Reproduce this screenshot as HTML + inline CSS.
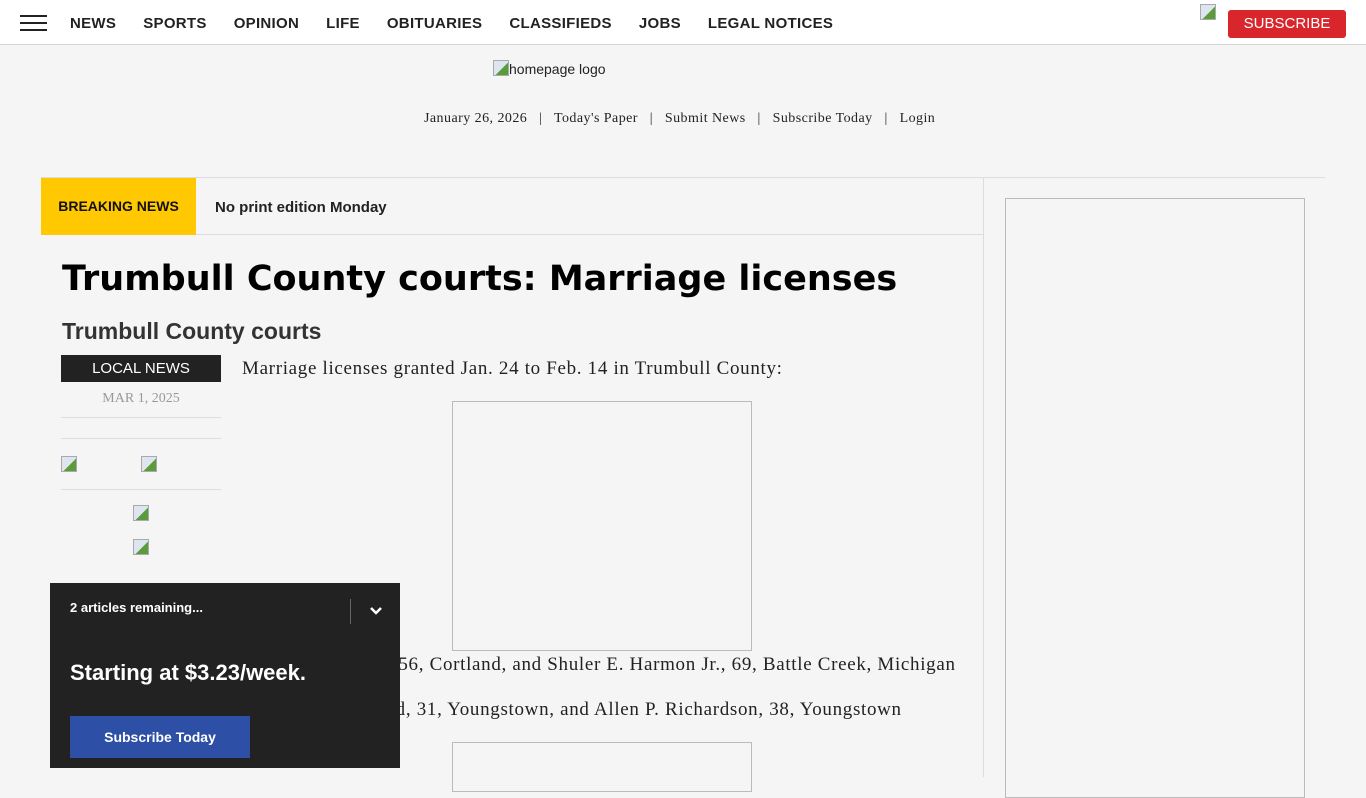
<!DOCTYPE html>
<html><head><meta charset="utf-8"><style>
*{margin:0;padding:0;box-sizing:border-box}
body{width:1366px;height:768px;overflow:hidden;background:#f5f5f5;font-family:"Liberation Sans",Arial,sans-serif;position:relative;color:#111}
.hdr{position:absolute;left:0;top:0;width:1366px;height:45px;background:#fff;border-bottom:1px solid #d6d6d6}
.burger{position:absolute;left:20px;top:15px;width:27px}
.burger i{display:block;height:2px;background:#222;margin-bottom:5px}
.nav{position:absolute;left:70px;top:15px;font-weight:bold;font-size:15px;color:#222;letter-spacing:.3px;white-space:nowrap}
.nav span{margin-right:27px}
.sub{position:absolute;left:1228px;top:10px;width:118px;height:28px;background:#d8262c;color:#fff;font-size:15px;text-align:center;line-height:28px;border-radius:3px}
.a{position:absolute}
.serif{font-family:"Liberation Serif",Georgia,serif}
.ph{position:absolute;border:1px solid #bbb;background:#f5f5f5}
.ico{position:absolute;width:16px;height:16px;border:1px solid #aaa;background:linear-gradient(135deg,#dde6f0 55%,#5a9c3c 56%)}
.body{font-size:19px;color:#222;letter-spacing:.68px;white-space:nowrap}
</style></head><body>
<div class="hdr">
<div class="burger"><i></i><i></i><i></i></div>
<div class="nav"><span>NEWS</span><span>SPORTS</span><span>OPINION</span><span>LIFE</span><span>OBITUARIES</span><span>CLASSIFIEDS</span><span>JOBS</span><span>LEGAL NOTICES</span></div>
<div class="ico" style="left:1200px;top:4px"></div>
<div class="sub">SUBSCRIBE</div>
</div>
<div class="ico" style="left:493px;top:60px"></div>
<div class="a" style="left:509px;top:61px;font-size:14px;color:#222">homepage logo</div>
<div class="a serif" style="left:424px;top:111px;font-size:14px;color:#222;letter-spacing:.45px;white-space:nowrap">January 26, 2026 &nbsp;&nbsp;|&nbsp;&nbsp; Today's Paper &nbsp;&nbsp;|&nbsp;&nbsp; Submit News &nbsp;&nbsp;|&nbsp;&nbsp; Subscribe Today &nbsp;&nbsp;|&nbsp;&nbsp; Login</div>
<div class="a" style="left:41px;top:177px;width:1284px;height:1px;background:#ddd"></div>
<div class="a" style="left:983px;top:177px;width:1px;height:600px;background:#ddd"></div>
<div class="a" style="left:41px;top:234px;width:942px;height:1px;background:#ddd"></div>
<div class="a" style="left:41px;top:178px;width:155px;height:57px;background:#ffc800;font-weight:bold;font-size:14px;line-height:57px;text-align:center">BREAKING NEWS</div>
<div class="a" style="left:215px;top:199px;font-weight:bold;font-size:15px;color:#222">No print edition Monday</div>
<div class="a" style="left:62px;top:259px;font-family:'DejaVu Sans',sans-serif;font-weight:bold;font-size:35px;color:#000;white-space:nowrap">Trumbull County courts: Marriage licenses</div>
<div class="a" style="left:62px;top:318px;font-weight:bold;font-size:23px;color:#333">Trumbull County courts</div>
<div class="a" style="left:61px;top:355px;width:160px;height:27px;background:#222;color:#fff;text-align:center;line-height:27px;font-size:15px">LOCAL NEWS</div>
<div class="a serif" style="left:61px;top:391px;width:160px;text-align:center;font-size:14px;color:#999">MAR 1, 2025</div>
<div class="a" style="left:61px;top:417px;width:160px;height:1px;background:#ddd"></div>
<div class="a" style="left:61px;top:438px;width:160px;height:1px;background:#ddd"></div>
<div class="a" style="left:61px;top:489px;width:160px;height:1px;background:#ddd"></div>
<div class="ico" style="left:61px;top:456px"></div>
<div class="ico" style="left:141px;top:456px"></div>
<div class="ico" style="left:133px;top:505px"></div>
<div class="ico" style="left:133px;top:539px"></div>
<div class="a serif body" style="left:242px;top:358px">Marriage licenses granted Jan. 24 to Feb. 14 in Trumbull County:</div>
<div class="ph" style="left:452px;top:401px;width:300px;height:250px"></div>
<div class="a serif body" style="left:238px;top:654px">Daniel R. Winkler, 56, Cortland, and Shuler E. Harmon Jr., 69, Battle Creek, Michigan</div>
<div class="a serif body" style="left:232px;top:699px">Jasmine R. Crawford, 31, Youngstown, and Allen P. Richardson, 38, Youngstown</div>
<div class="ph" style="left:452px;top:742px;width:300px;height:50px"></div>
<div class="ph" style="left:1005px;top:198px;width:300px;height:600px"></div>
<div class="a" style="left:50px;top:583px;width:350px;height:185px;background:#222;color:#fff">
<div class="a" style="left:20px;top:17px;font-size:13px;font-weight:bold">2 articles remaining...</div>
<div class="a" style="left:300px;top:16px;width:1px;height:25px;background:#666"></div>
<svg class="a" style="left:319px;top:23px" width="14" height="10" viewBox="0 0 14 10"><path d="M2 2l5 5 5-5" stroke="#fff" stroke-width="2.5" fill="none"/></svg>
<div class="a" style="left:20px;top:77px;font-size:22px;font-weight:bold">Starting at $3.23/week.</div>
<div class="a" style="left:20px;top:133px;width:180px;height:42px;background:#2d4fa6;text-align:center;line-height:42px;font-size:14px;font-weight:bold">Subscribe Today</div>
</div>
</body></html>
